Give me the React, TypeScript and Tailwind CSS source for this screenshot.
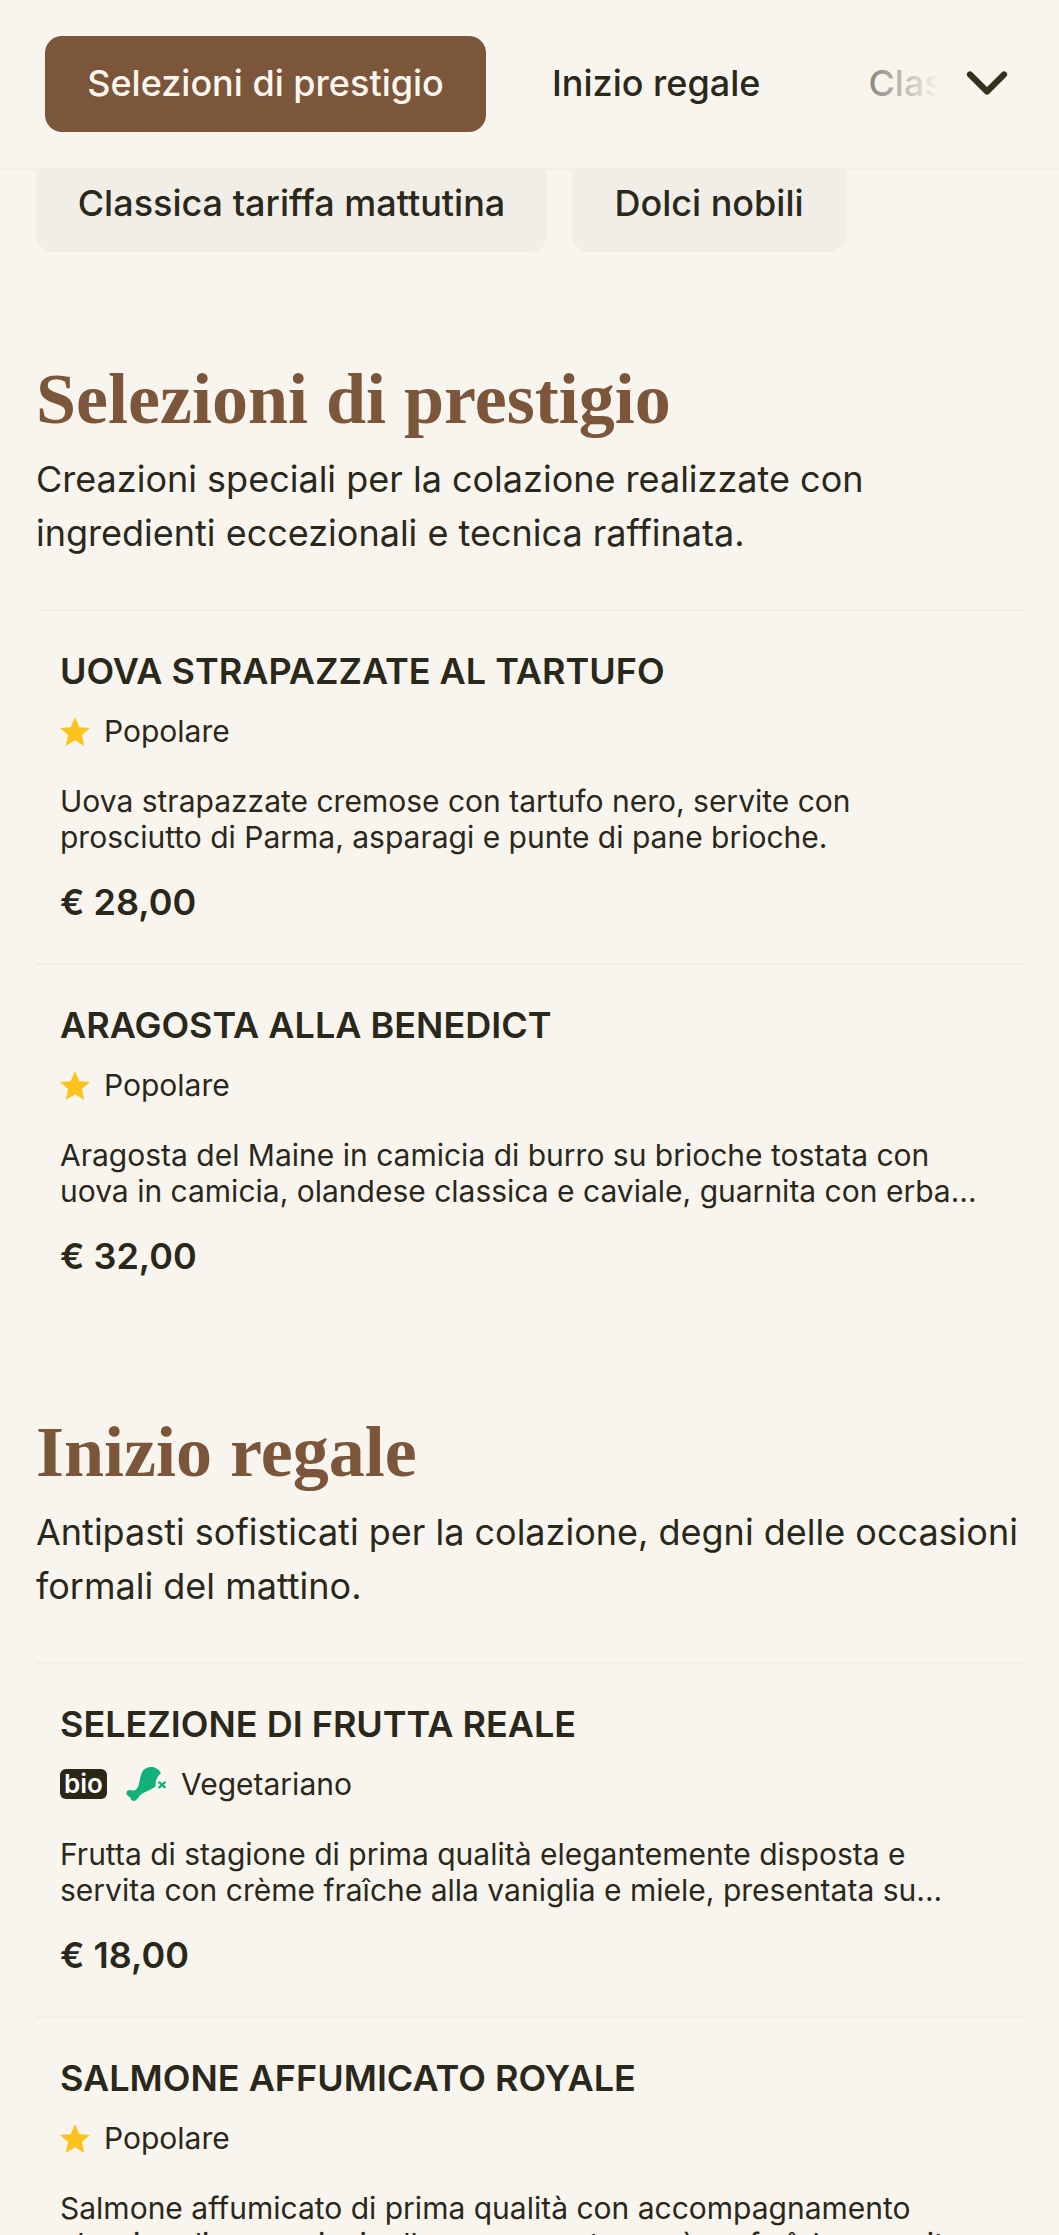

import { ChevronDown } from 'lucide-react';

const inter = { fontFamily: 'Inter, sans-serif' };

type Tag = 'popular' | 'veg';

interface Dish {
  name: string;
  tag: Tag;
  lines: string[];
  price?: string;
}

const prestigio: Dish[] = [
  {
    name: 'UOVA STRAPAZZATE AL TARTUFO',
    tag: 'popular',
    lines: [
      'Uova strapazzate cremose con tartufo nero, servite con',
      'prosciutto di Parma, asparagi e punte di pane brioche.',
    ],
    price: '€ 28,00',
  },
  {
    name: 'ARAGOSTA ALLA BENEDICT',
    tag: 'popular',
    lines: [
      'Aragosta del Maine in camicia di burro su brioche tostata con',
      'uova in camicia, olandese classica e caviale, guarnita con erba...',
    ],
    price: '€ 32,00',
  },
];

const inizio: Dish[] = [
  {
    name: 'SELEZIONE DI FRUTTA REALE',
    tag: 'veg',
    lines: [
      'Frutta di stagione di prima qualità elegantemente disposta e',
      'servita con crème fraîche alla vaniglia e miele, presentata su...',
    ],
    price: '€ 18,00',
  },
  {
    name: 'SALMONE AFFUMICATO ROYALE',
    tag: 'popular',
    lines: [
      'Salmone affumicato di prima qualità con accompagnamento',
      'classico di capperi, cipolla rossa, aneto e crème fraîche, servito...',
    ],
  },
];

function Star() {
  return (
    <svg viewBox="0 0 30 29" className="h-[29px] w-[30px] shrink-0 text-[#fcc31e]" fill="currentColor">
      <path d="M15 0l4.3 10.3L30 11.1 21.9 18l2.4 11L15 23.2 5.7 29l2.4-11L0 11.1l10.7-.8z" />
    </svg>
  );
}

function Drumstick() {
  return (
    <svg viewBox="0 0 124 110" className="h-[36px] w-[41px] shrink-0 text-[#12b07a]" fill="currentColor">
      <path d="M30 72C42 62 40 32 50 16 56 6 72 0 84 4c10 3 18 9 22 18-10 8-18 22-16 40-16 14-38 16-50 30-4 9-12 17-20 14-6-2-7-7-8-11-6-2-13-7-11-15 2-7 13-9 21-4z" />
      <path d="M101 50l17 15M118 50l-17 15" stroke="currentColor" strokeWidth="7" strokeLinecap="round" fill="none" />
    </svg>
  );
}

function DishRow({ dish }: { dish: Dish }) {
  return (
    <div className="border-t-2 border-[#f1eee8] px-[24px] pt-[38px] pb-[39px]">
      <h3 className="text-[36px] leading-[44px] font-semibold text-[#2a281b]">{dish.name}</h3>
      <div className="mt-[19px] flex h-[38px] items-center">
        {dish.tag === 'popular' ? (
          <>
            <Star />
            <span className="ml-[14px] text-[30px] text-[#2a281b]">Popolare</span>
          </>
        ) : (
          <>
            <span className="flex h-[30px] w-[47px] items-center justify-center rounded-[6px] bg-[#2a2618] pb-[1px] text-[26px] font-semibold text-white">
              bio
            </span>
            <span className="ml-[19px] flex">
              <Drumstick />
            </span>
            <span className="ml-[14px] text-[30px] text-[#2a281b]">Vegetariano</span>
          </>
        )}
      </div>
      <p className="mt-[33px] text-[30px] leading-[36px] whitespace-nowrap text-[#2a281b]">
        {dish.lines[0]}
        <br />
        {dish.lines[1]}
      </p>
      {dish.price && <p className="mt-[25px] text-[36px] leading-[44px] font-semibold text-[#2a281b]">{dish.price}</p>}
    </div>
  );
}

function Section({ title, intro, dishes }: { title: string; intro: string[]; dishes: Dish[] }) {
  return (
    <section>
      <h2
        className="text-[72px] leading-[84px] font-bold text-[#7b563b]"
        style={{ fontFamily: '"Liberation Serif", serif' }}
      >
        {title}
      </h2>
      <p className="mt-[11px] text-[36px] leading-[54px] whitespace-nowrap text-[#2a281b]">
        {intro[0]}
        <br />
        {intro[1]}
      </p>
      <div className="mt-[49px]">
        {dishes.map((dish) => (
          <DishRow key={dish.name} dish={dish} />
        ))}
      </div>
    </section>
  );
}

export default function App() {
  return (
    <div className="h-[2235px] overflow-hidden bg-[#f8f5ef]" style={inter}>
      {/* Tab bar */}
      <header className="relative flex h-[170px] items-center border-b-2 border-[#f1eee8] pl-[45px]">
        <div className="flex h-[96px] items-center overflow-hidden">
          <button
            type="button"
            className="flex h-[96px] w-[441px] shrink-0 items-center justify-center rounded-[17px] bg-[#7b563b] pb-[2px] text-[36px] font-medium text-[#fbf6ee]"
          >
            Selezioni di prestigio
          </button>
          <span className="ml-[66px] shrink-0 pb-[2px] text-[36px] font-medium text-[#2a281b]">Inizio regale</span>
          <span className="ml-[108px] w-[70px] overflow-hidden pb-[2px] text-[36px] font-medium whitespace-nowrap text-[#2a281b]">
            Classica
          </span>
        </div>
        <div className="absolute top-0 left-[860px] h-full w-[80px] bg-gradient-to-r from-[#f8f5ef]/40 to-[#f8f5ef]" />
        <ChevronDown className="absolute top-[49px] left-[953px] h-[68px] w-[68px] text-[#34311f]" strokeWidth={2.2} />
      </header>

      {/* Second row of tabs, partly under the bar */}
      <div className="flex gap-[25px] pl-[36px]">
        <span className="flex h-[82px] w-[511px] items-start justify-center rounded-b-[17px] bg-[#f1eee8] pt-[6px] text-[36px] font-medium text-[#2a281b]">
          Classica tariffa mattutina
        </span>
        <span className="flex h-[82px] w-[274px] items-start justify-center rounded-b-[17px] bg-[#f1eee8] pt-[6px] text-[36px] font-medium text-[#2a281b]">
          Dolci nobili
        </span>
      </div>

      <main className="flex flex-col gap-[93px] px-[36px] pt-[105px]">
        <Section
          title="Selezioni di prestigio"
          intro={[
            'Creazioni speciali per la colazione realizzate con',
            'ingredienti eccezionali e tecnica raffinata.',
          ]}
          dishes={prestigio}
        />
        <Section
          title="Inizio regale"
          intro={[
            'Antipasti sofisticati per la colazione, degni delle occasioni',
            'formali del mattino.',
          ]}
          dishes={inizio}
        />
      </main>
    </div>
  );
}
